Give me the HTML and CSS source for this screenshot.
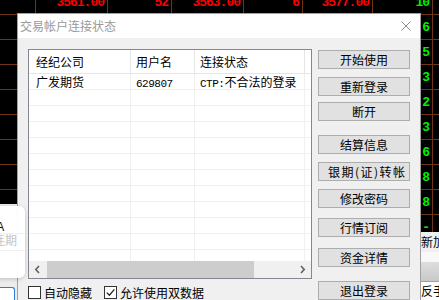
FILE: index.html
```html
<!DOCTYPE html>
<html lang="zh-CN">
<head>
<meta charset="utf-8">
<title>交易帐户连接状态</title>
<link rel="stylesheet" href="styles.css">
</head>
<body>
<div class="desk">
  <div class="quotes">
    <div class="q c1">3561.00</div>
    <div class="q c2">52</div>
    <div class="q c3">3563.00</div>
    <div class="q c4">6</div>
    <div class="q c5">3577.00</div>
    <div class="q c6 g">10</div>
    <div class="q c6 g">6</div>
    <div class="q c6 g">5</div>
    <div class="q c6 g">3</div>
    <div class="q c6 g">2</div>
    <div class="q c6 g">3</div>
    <div class="q c6 g">6</div>
    <div class="q c6 g">8</div>
    <div class="q c6 g">8</div>
    <div class="q c6 g">-</div>
  </div>

  <div class="panel-left">
    <div class="editbox"></div>
  </div>

  <div class="panel-right">
    <div class="tab">新加坡</div>
    <div class="sp"></div>
    <div class="grad"></div>
    <div class="strip">反手</div>
  </div>

  <div class="dialog">
    <div class="titlebar">
      <span class="title">交易帐户连接状态</span>
      <svg class="close" width="10" height="10" viewBox="0 0 10 10"><path d="M0.5 0.5 L9.5 9.5 M9.5 0.5 L0.5 9.5" stroke="#8c8c8c" stroke-width="1" fill="none"/></svg>
    </div>
    <div class="dlg-body">
      <div class="left-col">
        <div class="list">
          <div class="cols head">
            <div class="th first">经纪公司</div>
            <div class="th">用户名</div>
            <div class="th">连接状态</div>
            <div class="th last"></div>
          </div>
          <div class="rows">
            <div class="cols row"><div class="td first">广发期货</div><div class="td"><span class="mono">629807</span></div><div class="td"><span class="mono">CTP:</span>不合法的登录</div><div class="td last"></div></div>
            <div class="cols row"><div class="td"></div><div class="td"></div><div class="td"></div><div class="td last"></div></div>
            <div class="cols row"><div class="td"></div><div class="td"></div><div class="td"></div><div class="td last"></div></div>
            <div class="cols row"><div class="td"></div><div class="td"></div><div class="td"></div><div class="td last"></div></div>
            <div class="cols row"><div class="td"></div><div class="td"></div><div class="td"></div><div class="td last"></div></div>
            <div class="cols row"><div class="td"></div><div class="td"></div><div class="td"></div><div class="td last"></div></div>
            <div class="cols row"><div class="td"></div><div class="td"></div><div class="td"></div><div class="td last"></div></div>
            <div class="cols row"><div class="td"></div><div class="td"></div><div class="td"></div><div class="td last"></div></div>
            <div class="cols row"><div class="td"></div><div class="td"></div><div class="td"></div><div class="td last"></div></div>
            <div class="cols row"><div class="td"></div><div class="td"></div><div class="td"></div><div class="td last"></div></div>
            <div class="cols row"><div class="td"></div><div class="td"></div><div class="td"></div><div class="td last"></div></div>
            <div class="cols row"><div class="td"></div><div class="td"></div><div class="td"></div><div class="td last"></div></div>
          </div>
          <div class="hscroll">
            <span class="arrow"><svg width="7" height="9" viewBox="0 0 7 9"><path d="M5 1 L1.8 4.5 L5 8" stroke="#606060" stroke-width="1.6" fill="none"/></svg></span>
            <span class="thumb"></span>
            <span class="track"></span>
            <span class="arrow"><svg width="7" height="9" viewBox="0 0 7 9"><path d="M2 1 L5.2 4.5 L2 8" stroke="#606060" stroke-width="1.6" fill="none"/></svg></span>
          </div>
        </div>
        <div class="checks">
          <span class="cb"></span><span class="cb-label">自动隐藏</span>
          <span class="cb"><svg width="11" height="11" viewBox="0 0 11 11"><path d="M1.8 5.6 L4.4 8.2 L9.4 2.4" stroke="#222" stroke-width="1.3" fill="none"/></svg></span><span class="cb-label">允许使用双数据</span>
        </div>
      </div>
      <div class="buttons">
        <div class="btn">开始使用</div>
        <div class="btn m8">重新登录</div>
        <div class="btn m6">断开</div>
        <div class="btn m14">结算信息</div>
        <div class="btn m8 wide">银期(证)转帐</div>
        <div class="btn m8">修改密码</div>
        <div class="btn m10">行情订阅</div>
        <div class="btn m11">资金详情</div>
        <div class="btn m14">退出登录</div>
      </div>
    </div>
  </div>

  <div class="toast">
    <div class="toast-row one">DATA</div>
    <div class="toast-row two">连期</div>
    <div class="toast-row three"></div>
  </div>
</div>
</body>
</html>
```
FILE: styles.css
```css
html, body {
  margin: 0;
  padding: 0;
  background: #000;
}

.desk {
  position: relative;
  width: 439px;
  height: 300px;
  overflow: hidden;
  background: #000;
  font-family: "Noto Sans CJK SC", "Noto Sans", sans-serif;
  font-size: 12px;
}

/* quote table behind the dialog */
.quotes {
  display: grid;
  grid-template-columns: 36px 72px 64px 72px 59px 70px 60px 1fr;
  grid-auto-rows: 25px;
  margin-top: -10px;
  height: 325px;
  background-image:
    linear-gradient(90deg,
      transparent 35px, #6e3517 35px 36px,
      transparent 36px 107px, #6e3517 107px 108px,
      transparent 108px 171px, #6e3517 171px 172px,
      transparent 172px 243px, #6e3517 243px 244px,
      transparent 244px 302px, #6e3517 302px 303px,
      transparent 303px 372px, #6e3517 372px 373px,
      transparent 373px 432px, #6e3517 432px 433px,
      transparent 433px),
    repeating-linear-gradient(180deg, transparent 0 24px, #6e3517 24px 25px);
  font-family: "Liberation Mono", monospace;
  font-weight: bold;
  font-size: 13px;
}

.q {
  display: flex;
  align-items: center;
  justify-content: flex-end;
  height: 24px;
  padding-right: 4px;
  color: #ff0000;
  letter-spacing: -1px;
}
.q.g { color: #00f000; }
.c1 { grid-column: 2; }
.c2 { grid-column: 3; }
.c3 { grid-column: 4; }
.c4 { grid-column: 5; }
.c5 { grid-column: 6; }
.c6 { grid-column: 7; }

/* lower panels of the underlying app */
.panel-left {
  position: absolute;
  left: 0;
  top: 204px;
  width: 17px;
  height: 96px;
  background: #ececec;
  display: flex;
  flex-direction: column;
  justify-content: flex-end;
}
.editbox {
  height: 12px;
  margin-right: 2px;
  background: #fff;
  border-top: 1px solid #2f7bd4;
  border-right: 1px solid #2f7bd4;
  border-radius: 0 3px 0 0;
}

.panel-right {
  position: absolute;
  left: 421px;
  top: 232px;
  width: 18px;
  height: 68px;
  display: flex;
  flex-direction: column;
  color: #000;
}
.tab {
  height: 20px;
  background: #f0f0f0;
  line-height: 20px;
  white-space: nowrap;
  overflow: hidden;
}
.sp { height: 10px; background: #f8f8f8; }
.grad { height: 19px; background: linear-gradient(#dedede, #c8c8c8); }
.strip {
  flex: 1;
  background: #fff;
  border-top: 1px solid #7aa6d8;
  white-space: nowrap;
  overflow: hidden;
  line-height: 17px;
}

/* dialog window */
.dialog {
  position: absolute;
  left: 17px;
  top: 13px;
  width: 404px;
  height: 300px;
  box-sizing: border-box;
  border: 1px solid #a0a0a0;
  background: #f0f0f0;
  color: #000;
}
.titlebar {
  height: 24px;
  background: #fff;
  display: flex;
  align-items: center;
  justify-content: space-between;
  padding: 0 9px 0 2px;
}
.title {
  color: #9a9a9a;
  line-height: 24px;
}
.close { display: block; }

.dlg-body {
  display: flex;
  padding: 11px 0 0 10px;
}
.left-col {
  display: flex;
  flex-direction: column;
}
.list {
  width: 284px;
  height: 230px;
  box-sizing: border-box;
  border: 1px solid #828790;
  background: #fff;
  display: flex;
  flex-direction: column;
}
.cols {
  display: grid;
  grid-template-columns: 102px 64px 110px 1fr;
}
.head {
  height: 24px;
  box-sizing: border-box;
  border-bottom: 1px solid #e5e5e5;
}
.th {
  border-right: 1px solid #e5e5e5;
  padding-left: 5px;
  line-height: 23px;
  white-space: nowrap;
}
.th.first, .td.first { padding-left: 7px; }
.th.last, .td.last { border-right: none; }
.rows {
  height: 187px;
  overflow: hidden;
}
.row {
  height: 16px;
  box-sizing: border-box;
  border-bottom: 1px solid #f0f0f0;
}
.td {
  border-right: 1px solid #f0f0f0;
  padding-left: 5px;
  line-height: 15px;
  white-space: nowrap;
  overflow: hidden;
}
.mono {
  font-family: "Liberation Mono", monospace;
  font-size: 11px;
  letter-spacing: -0.5px;
}
.hscroll {
  height: 17px;
  display: flex;
  background: #f0f0f0;
}
.arrow {
  width: 17px;
  display: flex;
  align-items: center;
  justify-content: center;
}
.thumb {
  width: 207px;
  margin-left: 1px;
  background: #cdcdcd;
}
.track { flex: 1; }

.checks {
  display: flex;
  align-items: center;
  margin-top: 7px;
  height: 13px;
}
.cb {
  width: 13px;
  height: 13px;
  box-sizing: border-box;
  border: 1px solid #333;
  background: #fff;
  display: flex;
  align-items: center;
  justify-content: center;
}
.cb-label {
  margin-left: 3px;
  margin-right: 12px;
  line-height: 13px;
  white-space: nowrap;
}

.buttons {
  display: flex;
  flex-direction: column;
  margin-left: 6px;
  padding-top: 1px;
  width: 92px;
}
.btn {
  height: 19px;
  box-sizing: border-box;
  border: 1px solid #adadad;
  background: #e1e1e1;
  text-align: center;
  line-height: 17px;
  white-space: nowrap;
}
.btn.wide {
  letter-spacing: 1.5px;
  text-align: left;
  padding-left: 9px;
}
.m6 { margin-top: 6px; }
.m8 { margin-top: 8px; }
.m10 { margin-top: 10px; }
.m11 { margin-top: 11px; }
.m14 { margin-top: 14px; }

/* notification card lying over the dialog edge */
.toast {
  position: absolute;
  left: -60px;
  top: 206px;
  width: 85px;
  height: 72px;
  box-sizing: border-box;
  padding-top: 15px;
  background: rgba(255, 255, 255, 0.96);
  border-radius: 6px;
  box-shadow: 0 1px 4px rgba(0, 0, 0, 0.2);
}
.toast-row {
  height: 12px;
  white-space: nowrap;
}
.toast-row.one {
  padding-left: 34px;
  font-family: "Liberation Sans", sans-serif;
  font-size: 12px;
  line-height: 12px;
  color: #111;
}
.toast-row.two {
  padding-left: 53px;
  line-height: 12px;
  color: #c4c4c4;
  border-top: 1px solid #f0f0f0;
  padding-top: 0;
}
.toast-row.three {
  margin-top: 4px;
  border-top: 1px solid #f0f0f0;
}
```
